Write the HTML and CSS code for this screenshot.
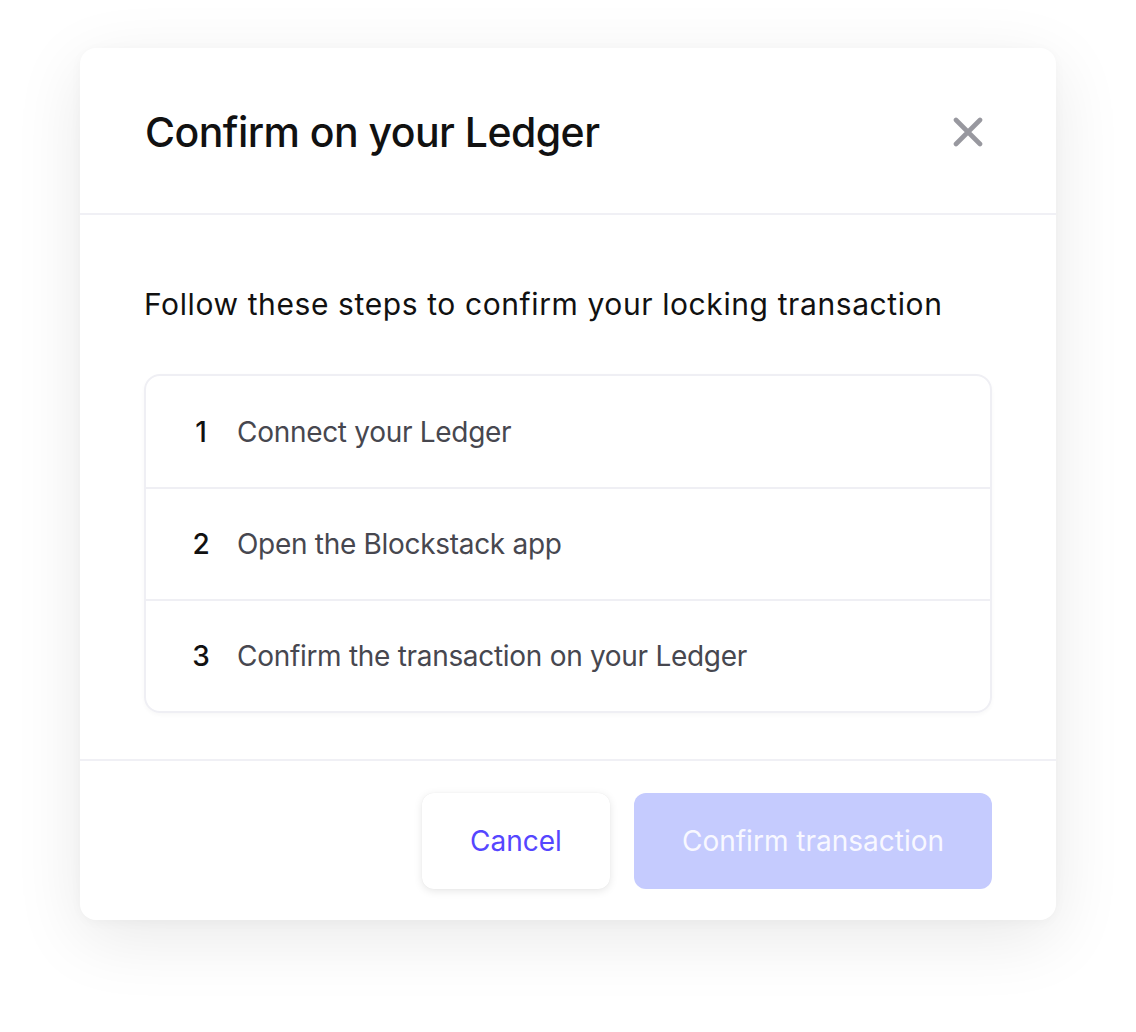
FILE: index.html
```html
<!DOCTYPE html>
<html>
<head>
<meta charset="utf-8">
<link rel="stylesheet" href="styles.css">
</head>
<body>
<div class="modal">
  <div class="modal-header">
    <h1 class="title">Confirm on your Ledger</h1>
    <button class="close" aria-label="Close">
      <svg width="30" height="30" viewBox="0 0 30 30"><path d="M3 3 L27 27 M27 3 L3 27" stroke="#98989f" stroke-width="4.6" stroke-linecap="round"/></svg>
    </button>
  </div>
  <div class="modal-body">
    <p class="intro">Follow these steps to confirm your locking transaction</p>
    <div class="steps">
      <div class="step"><span class="num">1</span><span class="label">Connect your Ledger</span></div>
      <div class="step"><span class="num">2</span><span class="label">Open the Blockstack app</span></div>
      <div class="step"><span class="num">3</span><span class="label">Confirm the transaction on your Ledger</span></div>
    </div>
  </div>
  <div class="modal-footer">
    <button class="btn btn-cancel">Cancel</button>
    <button class="btn btn-confirm">Confirm transaction</button>
  </div>
</div>
</body>
</html>
```
FILE: styles.css
```css
* { box-sizing: border-box; }
html, body { margin: 0; padding: 0; background: #ffffff; }
body {
  font-family: Inter, "Noto Sans", sans-serif;
  padding: 48px 0 0 80px;
  height: 1032px;
}
.modal {
  width: 976px;
  height: 872px;
  background: #fff;
  border-radius: 16px;
  box-shadow: 0 18px 70px rgba(0, 0, 0, 0.09), 0 2px 12px rgba(0, 0, 0, 0.03);
  display: flex;
  flex-direction: column;
}
.modal-header {
  height: 167px;
  padding: 2px 73px 0 65px;
  display: flex;
  align-items: center;
  justify-content: space-between;
  border-bottom: 2px solid #f0f0f5;
  flex-shrink: 0;
}
.title {
  margin: 0;
  font-size: 41px;
  font-weight: 500;
  color: #111111;
  letter-spacing: -0.55px;
}
.close {
  border: 0;
  background: none;
  padding: 0;
  width: 30px;
  height: 30px;
  display: flex;
}
.modal-body {
  padding: 69px 64px 0 64px;
  flex: 1;
  border-bottom: 2px solid #f0f0f5;
}
.intro {
  margin: 0 0 50px 0;
  font-size: 30px;
  line-height: 40px;
  color: #111111;
  font-weight: 400;
  letter-spacing: 0.6px;
}
.steps {
  border: 2px solid #efeff4;
  border-radius: 16px;
  box-shadow: 0 2px 4px rgba(0, 0, 0, 0.03);
}
.step {
  height: 112px;
  display: flex;
  align-items: center;
  padding: 0 0 0 43px;
  gap: 24px;
  font-size: 28px;
  letter-spacing: -0.3px;
}
.step:first-child { height: 111px; }
.step + .step { border-top: 2px solid #efeff4; }
.num {
  width: 24px;
  text-align: center;
  color: #111111;
  font-weight: 500;
}
.label { color: #47474f; }
.modal-footer {
  height: 159px;
  flex-shrink: 0;
  display: flex;
  justify-content: flex-end;
  align-items: center;
  gap: 24px;
  padding: 0 64px 0 0;
}
.btn {
  font-family: Inter, "Noto Sans", sans-serif;
  font-size: 28px;
  height: 96px;
  border-radius: 12px;
  border: 0;
  font-weight: 400;
}
.btn-cancel {
  width: 188px;
  background: #fff;
  color: #5546ff;
  box-shadow: 0 2px 8px rgba(0, 0, 0, 0.1), 0 0 1px rgba(0, 0, 0, 0.08);
}
.btn-confirm {
  width: 358px;
  background: #c5cbfe;
  color: #f8f8ff;
}
```
